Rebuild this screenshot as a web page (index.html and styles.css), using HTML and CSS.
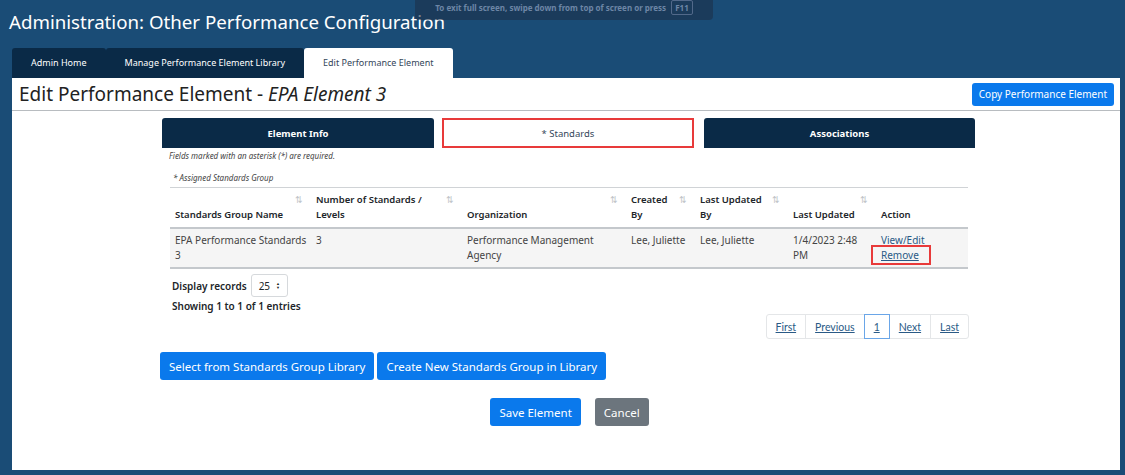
FILE: index.html
```html
<!DOCTYPE html>
<html lang="en">
<head>
    <meta charset="UTF-8">
    <meta name="viewport" content="width=device-width, initial-scale=1.0">
    <title>Administration: Other Performance Configuration</title>
    <link rel="stylesheet" href="styles.css">
</head>
<body>
    <div class="fullscreen-hint">To exit full screen, swipe down from top of screen or press <span class="key">F11</span></div>
    <h1 class="page-title">Administration: Other Performance Configuration</h1>
    <div class="top-tabs">
        <a class="top-tab">Admin Home</a>
        <a class="top-tab">Manage Performance Element Library</a>
        <a class="top-tab active">Edit Performance Element</a>
    </div>
    <div class="panel">
        <div class="panel-header">
            <h2>Edit Performance Element - <em>EPA Element 3</em></h2>
            <button class="btn btn-primary">Copy Performance Element</button>
        </div>
        <div class="content">
            <div class="step-tabs">
                <div class="step-tab info">Element Info</div>
                <div class="step-tab active">* Standards</div>
                <div class="step-tab assoc">Associations</div>
            </div>
            <p class="required-note">Fields marked with an asterisk (*) are required.</p>
            <div class="section">
                <div class="section-label">* Assigned Standards Group</div>
                <table class="grid">
                    <colgroup>
                        <col style="width: 141px">
                        <col style="width: 151px">
                        <col style="width: 164px">
                        <col style="width: 69px">
                        <col style="width: 93px">
                        <col style="width: 88px">
                        <col style="width: 92px">
                    </colgroup>
                    <thead>
                        <tr>
                            <th>Standards Group Name<span class="sort">&#8645;</span></th>
                            <th>Number of Standards / Levels<span class="sort">&#8645;</span></th>
                            <th>Organization<span class="sort">&#8645;</span></th>
                            <th>Created By<span class="sort">&#8645;</span></th>
                            <th>Last Updated By<span class="sort">&#8645;</span></th>
                            <th>Last Updated<span class="sort">&#8645;</span></th>
                            <th>Action</th>
                        </tr>
                    </thead>
                    <tbody>
                        <tr>
                            <td>EPA Performance Standards 3</td>
                            <td>3</td>
                            <td>Performance Management Agency</td>
                            <td>Lee, Juliette</td>
                            <td>Lee, Juliette</td>
                            <td class="updated">1/4/2023 2:48 PM</td>
                            <td><a class="link-plain">View/Edit</a><br><a class="link-remove">Remove</a></td>
                        </tr>
                    </tbody>
                </table>
                <div class="records">
                    <span>Display records</span>
                    <span class="select">25 <span class="arrows">&#9650;<br>&#9660;</span></span>
                </div>
                <div class="showing">Showing 1 to 1 of 1 entries</div>
                <div class="pager">
                    <a>First</a>
                    <a>Previous</a>
                    <a class="current">1</a>
                    <a>Next</a>
                    <a>Last</a>
                </div>
            </div>
            <div class="library-actions">
                <button class="btn btn-primary btn-lg">Select from Standards Group Library</button>
                <button class="btn btn-primary btn-lg">Create New Standards Group in Library</button>
            </div>
            <div class="form-actions">
                <button class="btn btn-primary btn-lg">Save Element</button>
                <button class="btn btn-secondary btn-lg">Cancel</button>
            </div>
        </div>
    </div>
</body>
</html>
```

FILE: styles.css
```css
body {
    font-family: "Noto Sans", "Open Sans", sans-serif;
    background-color: #1a4c76;
    color: #212529;
    margin: 0;
    padding: 0 5px 5px 12px;
    height: 470px;
}
.fullscreen-hint {
    position: absolute;
    left: 415px;
    top: -6px;
    width: 298px;
    height: 26px;
    padding-top: 6px;
    box-sizing: border-box;
    background-color: rgba(30, 45, 70, 0.55);
    border-radius: 4px;
    color: #6d86a6;
    font-size: 8px;
    font-weight: bold;
    text-align: center;
}
.fullscreen-hint .key {
    display: inline-block;
    border: 1px solid #52698a;
    border-radius: 2px;
    padding: 1px 3px;
    margin-left: 3px;
}
.page-title {
    color: #ffffff;
    font-weight: normal;
    font-size: 18.7px;
    margin: 0 0 0 -3px;
    padding-top: 9px;
    height: 48px;
    box-sizing: border-box;
}
.top-tabs {
    display: flex;
    height: 30px;
}
.top-tab {
    background-color: #0a2a47;
    color: #ffffff;
    font-size: 9px;
    padding: 0 19px;
    line-height: 30px;
    border-radius: 3px 3px 0 0;
}
.top-tab.active {
    background-color: #ffffff;
    color: #34465a;
}
.panel {
    background-color: #ffffff;
    height: 392px;
    width: 1108px;
}
.panel-header {
    display: flex;
    justify-content: space-between;
    align-items: center;
    height: 32px;
    padding: 0 6px 0 7px;
    border-bottom: 1px solid #b8bcc0;
}
.panel-header h2 {
    font-size: 19px;
    font-weight: normal;
    margin: 0;
    color: #222;
}
.btn {
    font-family: "Noto Sans", "Open Sans", sans-serif;
    border: none;
    border-radius: 3px;
    color: #ffffff;
    font-size: 10px;
    padding: 0 7px;
    height: 23px;
}
.btn-primary {
    background-color: #0a79ec;
}
.btn-secondary {
    background-color: #6c757d;
}
.btn-lg {
    font-size: 11.5px;
    height: 28px;
    padding: 0 9px;
}
.content {
    width: 813px;
    margin-left: 150px;
    padding-top: 7px;
}
.step-tabs {
    display: flex;
    height: 30px;
}
.step-tab {
    background-color: #0a2a47;
    color: #ffffff;
    font-size: 9.5px;
    font-weight: bold;
    display: flex;
    align-items: center;
    justify-content: center;
    border-radius: 3px 3px 0 0;
}
.step-tab.info {
    width: 272px;
}
.step-tab.assoc {
    width: 271px;
}
.step-tab.active {
    width: 252px;
    box-sizing: border-box;
    margin: 0 10px 0 8px;
    background-color: #ffffff;
    color: #34465a;
    font-weight: normal;
    border: 2px solid #e83a3a;
    border-radius: 0;
}
.required-note {
    font-style: italic;
    font-size: 8px;
    color: #444;
    margin: 2px 0 0 7px;
    height: 22px;
}
.section {
    padding: 0 7px 0 8px;
}
.section-label {
    font-style: italic;
    font-size: 8px;
    color: #444;
    padding: 0 0 4px 3px;
}
.grid {
    width: 798px;
    table-layout: fixed;
    border-collapse: collapse;
    font-size: 10px;
    border-top: 1px solid #d0d3d6;
}
.grid th {
    position: relative;
    font-weight: 600;
    font-size: 9.5px;
    text-align: left;
    vertical-align: bottom;
    padding: 4px 14px 5px 5px;
    border-bottom: 2px solid #c4c8cc;
    line-height: 15px;
    height: 30px;
}
.grid th .sort {
    position: absolute;
    top: 4px;
    right: 8px;
    color: #c0c4c8;
    font-weight: normal;
    font-size: 9px;
}
.grid td {
    background-color: #f5f5f5;
    vertical-align: top;
    padding: 4px 3px 4px 5px;
    line-height: 15px;
    color: #444;
    border-bottom: 2px solid #c4c8cc;
}
.grid td.updated {
    padding-right: 8px;
}
.link-plain {
    color: #2a5a86;
}
.link-remove {
    color: #2a5a86;
    text-decoration: underline;
    border: 2px solid #e83a3a;
    padding: 1px 10px 1px 8px;
    margin: 0 -12px 0 -10px;
}
.records {
    display: flex;
    align-items: center;
    gap: 4px;
    font-size: 10px;
    font-weight: 600;
    margin-top: 5px;
    padding-left: 2px;
}
.select {
    display: inline-flex;
    align-items: center;
    gap: 6px;
    border: 1px solid #d6d9dc;
    border-radius: 3px;
    height: 23px;
    padding: 0 7px;
    font-weight: normal;
    box-sizing: border-box;
}
.select .arrows {
    font-size: 4px;
    line-height: 4px;
    color: #222;
}
.showing {
    font-size: 10px;
    font-weight: 600;
    margin-top: 2px;
    padding-left: 2px;
}
.pager {
    display: flex;
    justify-content: flex-end;
    margin: 1px -1px 0 0;
    font-family: Lato, sans-serif;
    font-size: 10.5px;
}
.pager a {
    color: #2a5a86;
    text-decoration: underline;
    border: 1px solid #e4e6e8;
    margin-left: -1px;
    height: 25px;
    line-height: 25px;
    padding: 0 9px;
    box-sizing: border-box;
}
.pager a:first-child {
    border-radius: 3px 0 0 3px;
}
.pager a:last-child {
    border-radius: 0 3px 3px 0;
}
.pager a.current {
    border-color: #6aa6e8;
    position: relative;
}
.library-actions {
    display: flex;
    gap: 3px;
    margin: 13px 0 0 -2px;
}
.form-actions {
    display: flex;
    justify-content: center;
    gap: 14px;
    margin-top: 18px;
    padding-left: 2px;
}
```
